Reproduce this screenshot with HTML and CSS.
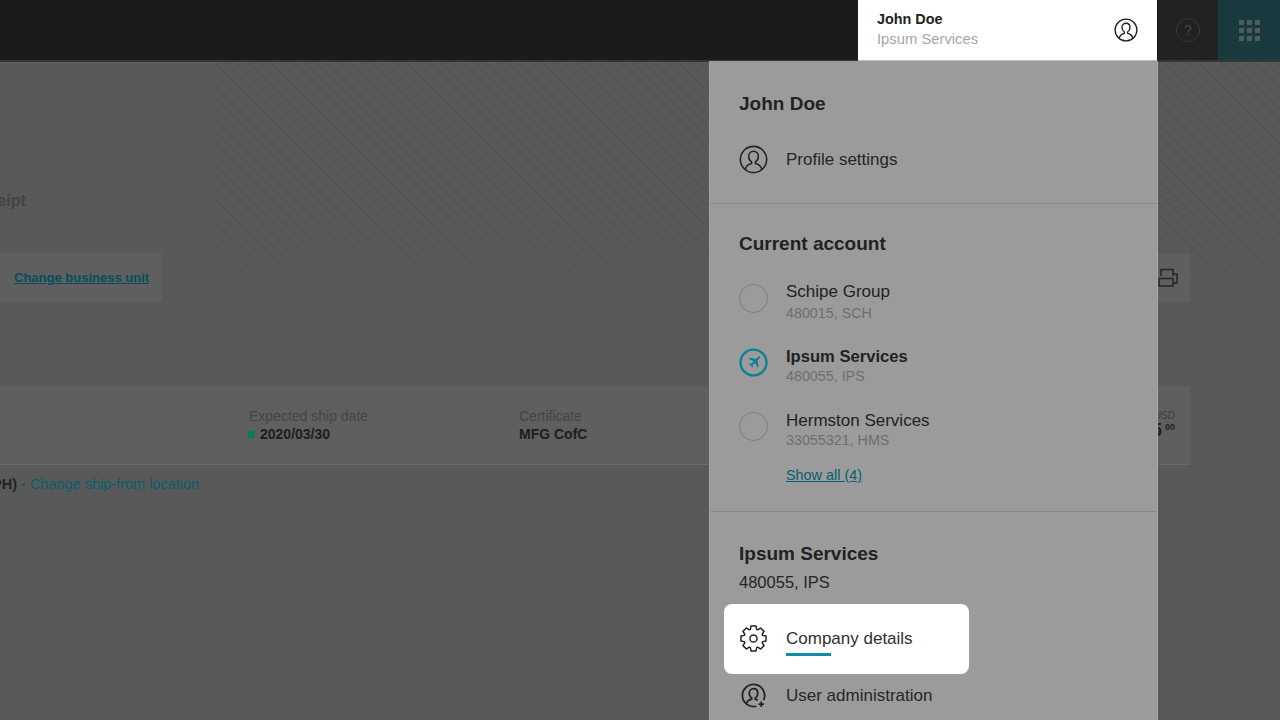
FILE: index.html
```html
<!DOCTYPE html>
<html lang="en">
<head>
<meta charset="utf-8">
<title>Account menu</title>
<link rel="stylesheet" href="styles.css">
</head>
<body>
<div class="page">
  <header class="topbar">
    <div class="user-box">
      <div class="user-text">
        <div class="user-name">John Doe</div>
        <div class="user-company">Ipsum Services</div>
      </div>
      <svg class="icon-24" viewBox="0 0 30 30" fill="none" stroke="#222" stroke-width="1.700"><circle cx="15" cy="15" r="13.600"/><path d="M6.500 25.500c.5-3.500 3.500-5.500 6.500-6.300v-1.700c-1.800-1.200-3-3.200-3-5.500 0-3.200 2.100-5.500 5-5.500s5 2.300 5 5.500c0 2.300-1.200 4.300-3 5.500v1.700c3 .8 6 2.800 6.500 6.300"/></svg>
    </div>
    <div class="help-cell"><span class="help-icon">?</span></div>
    <div class="apps-cell">
      <div class="apps-grid"><i></i><i></i><i></i><i></i><i></i><i></i><i></i><i></i><i></i></div>
    </div>
  </header>

  <main class="content">
    <div class="hatch"></div>
    <h1 class="page-title">Receipt</h1>
    <div class="toolbar">
      <div class="toolbar-left"><a class="link-strong">Change business unit</a></div>
      <div class="toolbar-right">
        <svg class="printer" viewBox="0 0 20 20" fill="none" stroke="#262626" stroke-width="1.500"><path d="M3 8V1.500h12V8M1 10.500h14V18H1zM15 6h4v9h-4"/></svg>
      </div>
    </div>
    <section class="order">
      <div class="order-row">
        <div class="field field-date">
          <div class="field-label">Expected ship date</div>
          <div class="field-value"><span class="status-dot"></span>2020/03/30</div>
        </div>
        <div class="field field-cert">
          <div class="field-label">Certificate</div>
          <div class="field-value">MFG CofC</div>
        </div>
        <div class="price">
          <div class="price-currency">USD</div>
          <div class="price-value">$5<sup>00</sup></div>
        </div>
      </div>
      <div class="order-foot"><span class="foot-text">PH)</span><span class="foot-sep"> - </span><a class="link">Change ship-from location</a></div>
    </section>
  </main>

  <aside class="menu">
    <section class="menu-section profile">
      <h2 class="menu-heading">John Doe</h2>
      <div class="menu-row row-profile">
        <svg class="icon-30" viewBox="0 0 30 30" fill="none" stroke="#222" stroke-width="1.600"><circle cx="15" cy="15" r="13.600"/><path d="M6.500 25.500c.5-3.500 3.500-5.500 6.500-6.300v-1.700c-1.800-1.200-3-3.200-3-5.500 0-3.200 2.100-5.500 5-5.500s5 2.300 5 5.500c0 2.300-1.200 4.300-3 5.500v1.700c3 .8 6 2.800 6.500 6.300"/></svg>
        <span class="row-label">Profile settings</span>
      </div>
    </section>

    <section class="menu-section accounts">
      <h2 class="menu-heading">Current account</h2>
      <div class="account account-first">
        <span class="radio"></span>
        <div class="account-text"><div class="account-name">Schipe Group</div><div class="account-code code-gap">480015, SCH</div></div>
      </div>
      <div class="account">
        <svg class="radio-on" viewBox="0 0 30 30" fill="none"><circle cx="15" cy="15" r="13.400" stroke="#0b7f94" stroke-width="2.400"/><path transform="translate(2.250 2.250) scale(.85)" fill="#0b7f94" d="M20.600 8.200c.9-.8 2-.9 2.300-.5s.2 1.300-.6 2.200l-2.600 2.600 1.500 7.200-1.400 1.400-3-5.800-2.800 2.700.3 2.400-1 1-1.500-2.800-2.800-1.500 1-1 2.400.3 2.700-2.800-5.800-3 1.400-1.400 7.200 1.500z"/></svg>
        <div class="account-text"><div class="account-name account-current">Ipsum Services</div><div class="account-code">480055, IPS</div></div>
      </div>
      <div class="account">
        <span class="radio"></span>
        <div class="account-text"><div class="account-name">Hermston Services</div><div class="account-code">33055321, HMS</div></div>
      </div>
      <a class="show-all">Show all (4)</a>
    </section>

    <section class="menu-section company">
      <h2 class="menu-heading">Ipsum Services</h2>
      <div class="company-code">480055, IPS</div>
      <div class="highlight">
        <svg class="icon-30 gear" viewBox="0 0 30 30" fill="none" stroke="#222" stroke-width="1.500" stroke-linejoin="round"><circle cx="15" cy="15" r="3.700"/><path d="M11.740 5.540 12.480 2.040H17.520L18.260 5.540 19.380 6.010 22.380 4.060 25.940 7.620 23.990 10.620 24.460 11.740 27.960 12.480V17.520L24.460 18.260 23.990 19.380 25.940 22.380 22.380 25.940 19.380 23.990 18.260 24.460 17.520 27.960H12.480L11.740 24.460 10.620 23.990 7.620 25.940 4.060 22.380 6.010 19.380 5.540 18.260 2.040 17.520V12.480L5.540 11.740 6.010 10.620 4.060 7.620 7.620 4.060 10.620 6.010z"/></svg>
        <div class="highlight-label">
          <span class="row-label label-bright">Company details</span>
          <span class="underline"></span>
        </div>
      </div>
      <div class="menu-row row-admin">
        <svg class="icon-30" viewBox="0 0 30 30" fill="none" stroke="#222" stroke-width="1.800"><path d="M25.400 19.900A11.500 11.500 0 1 0 18 26.100"/><path d="M7.500 23.800c.6-2.700 3-4.300 5.700-5v-1.300c-1.600-1-2.600-2.800-2.600-4.800 0-2.800 1.800-4.700 4.400-4.700s4.400 1.900 4.400 4.700c0 2-1 3.800-2.600 4.800v1.300c1 .3 1.900.6 2.700 1.100"/><path d="M23 21.200v5.600M20.200 24h5.600"/></svg>
        <span class="row-label">User administration</span>
      </div>
    </section>
  </aside>
</div>
</body>
</html>
```

FILE: styles.css
```css
* { box-sizing: border-box; }

html, body {
  margin: 0;
  height: 100%;
  overflow: hidden;
  background: #595959;
}

body, h1, h2 {
  font-family: "Liberation Sans", Arial, sans-serif;
}

.page {
  position: relative;
  width: 1280px;
  height: 720px;
  overflow: hidden;
  display: flex;
  flex-direction: column;
  background: #595959;
}

/* top bar */
.topbar {
  height: 62px;
  flex: none;
  display: flex;
  justify-content: flex-end;
  background: #1b1b1b;
  border-bottom: 2px solid #363636;
}

.user-box {
  position: relative;
  z-index: 3;
  width: 299px;
  height: 61px;
  margin-right: 1px;
  padding: 0 19px 2px;
  display: flex;
  align-items: center;
  justify-content: space-between;
  background: #fff;
  border-bottom: 1px solid #bdbdbd;
}

.user-name {
  font-size: 14.400px;
  line-height: 20px;
  font-weight: 700;
  color: #222;
}

.user-company {
  font-size: 14.800px;
  line-height: 20px;
  color: #a6a6a6;
}

.icon-24 { width: 24px; height: 24px; flex: none; margin-top: 2px; }
.icon-30 { width: 29px; height: 29px; flex: none; }
.gear { margin-top: -2px; }

.help-cell {
  width: 60px;
  display: flex;
  align-items: center;
  justify-content: center;
  background: #222;
}

.help-icon {
  width: 24px;
  height: 24px;
  border: 1px solid #3a3a3a;
  border-radius: 50%;
  text-align: center;
  font-size: 14px;
  line-height: 22px;
  color: #444;
}

.apps-cell {
  width: 62px;
  display: flex;
  align-items: center;
  justify-content: center;
  background: #18393e;
}

.apps-grid {
  display: grid;
  grid-template-columns: repeat(3, 5px);
  gap: 3px;
  margin-left: 1px;
}

.apps-grid i {
  width: 5px;
  height: 5px;
  background: #515c5e;
}

/* dimmed page */
.content {
  position: relative;
  flex: 1;
  width: 1190px;
}

.hatch {
  position: absolute;
  top: 0;
  left: 215px;
  width: 1065px;
  height: 260px;
  background: repeating-linear-gradient(45deg, #595959 0 6px, #555 6px 8px);
  -webkit-mask-image: linear-gradient(#000 60%, transparent);
  mask-image: linear-gradient(#000 60%, transparent);
}

.page-title {
  position: relative;
  margin: 128px 0 0 -32px;
  font-size: 16px;
  line-height: 22px;
  font-weight: 700;
  color: #434343;
}

.toolbar {
  position: relative;
  margin-top: 41px;
  display: flex;
  justify-content: space-between;
}

.toolbar-left {
  width: 162px;
  height: 49px;
  padding-left: 14px;
  display: flex;
  align-items: center;
  background: #5f5f5f;
}

.toolbar-right {
  width: 100px;
  height: 49px;
  padding: 0 12px 0 68px;
  display: flex;
  align-items: center;
  background: #5f5f5f;
}

.printer { width: 20px; height: 20px; flex: none; }

.link-strong {
  font-size: 13px;
  font-weight: 700;
  color: #04505c;
  text-decoration: underline;
  white-space: nowrap;
}

.order {
  position: relative;
  margin-top: 84px;
}

.order-row {
  height: 79px;
  padding-left: 249px;
  display: flex;
  align-items: center;
  background: #5f5f5f;
  border-bottom: 1px solid #696969;
}

.field-label {
  font-size: 14px;
  line-height: 18px;
  color: #454545;
}

.field-value {
  font-size: 14px;
  line-height: 18px;
  font-weight: 700;
  color: #1d1d1d;
}

.field-date { width: 270px; }
.field-cert { width: 300px; }

.status-dot {
  display: inline-block;
  width: 7px;
  height: 7px;
  margin: 0 5px 0 -1px;
  vertical-align: 1px;
  background: #0b7a55;
}

.price {
  margin-left: auto;
  padding-right: 15px;
  margin-top: -2px;
  text-align: right;
}

.price-currency {
  font-size: 10px;
  line-height: 12px;
  color: #3d3d3d;
}

.price-value {
  font-size: 18px;
  line-height: 16px;
  font-weight: 700;
  color: #222;
}

.price-value sup {
  font-size: 9px;
  line-height: 0;
  vertical-align: 6px;
  margin-left: 3px;
}

.order-foot {
  margin: 10px 0 0 -8px;
  font-size: 14.500px;
  line-height: 18px;
}

.foot-text { color: #222; font-weight: 700; }
.foot-sep { color: #3a3a3a; }
.link { color: #05606e; }

/* account menu */
.menu {
  position: absolute;
  z-index: 2;
  top: 61px;
  left: 709px;
  width: 449px;
  height: 659px;
  display: flex;
  flex-direction: column;
  background: #9b9b9b;
  border-right: 1px solid #a8a8a8;
  border-left: 1px solid #a2a2a2;
  color: #222;
}

.menu-section {
  padding: 0 29px;
  border-bottom: 1px solid #8a8a8a;
}

.menu-section.company { border-bottom: 0; flex: 1; }

.profile { height: 143px; padding-top: 31px; }
.accounts { height: 308px; padding-top: 28px; }
.company { padding-top: 30px; }

.menu-heading {
  margin: 0;
  font-size: 19px;
  line-height: 24px;
  font-weight: 700;
  color: #222;
}

.menu-row {
  display: flex;
  align-items: center;
  gap: 18px;
}

.row-profile { margin-top: 29px; }
.row-admin { margin-top: 7px; }

.row-label {
  font-size: 17px;
  line-height: 20px;
  color: #262626;
}

.label-bright { color: #303030; }

.account {
  display: flex;
  align-items: center;
  gap: 18px;
  height: 64px;
}

.account-first { margin-top: 10px; }

.radio {
  width: 29px;
  height: 29px;
  flex: none;
  border: 1.500px solid #7e7e7e;
  border-radius: 50%;
}

.radio-on { width: 29px; height: 29px; flex: none; }

.account-text { padding-top: 7px; }

.account-name {
  font-size: 17px;
  line-height: 20px;
  color: #222;
}

.account-current { font-size: 16.600px; font-weight: 700; }

.account-code {
  font-size: 14.300px;
  line-height: 18px;
  color: #6e6e6e;
}

.code-gap { margin-top: 2px; }

.show-all {
  display: block;
  margin: 8px 0 0 47px;
  font-size: 14.400px;
  line-height: 18px;
  color: #05606e;
  text-decoration: underline;
}

.company-code {
  margin-top: 6px;
  font-size: 16.500px;
  line-height: 20px;
  color: #262626;
}

.highlight {
  margin: 12px 0 0 -15px;
  width: 245px;
  height: 70px;
  padding: 0 15px;
  display: flex;
  align-items: center;
  gap: 18px;
  background: #fff;
  border-radius: 8px;
}

.highlight-label {
  position: relative;
}

.underline {
  position: absolute;
  left: 0;
  bottom: -7px;
  width: 45px;
  height: 3px;
  background: #0f8ea5;
}
```
